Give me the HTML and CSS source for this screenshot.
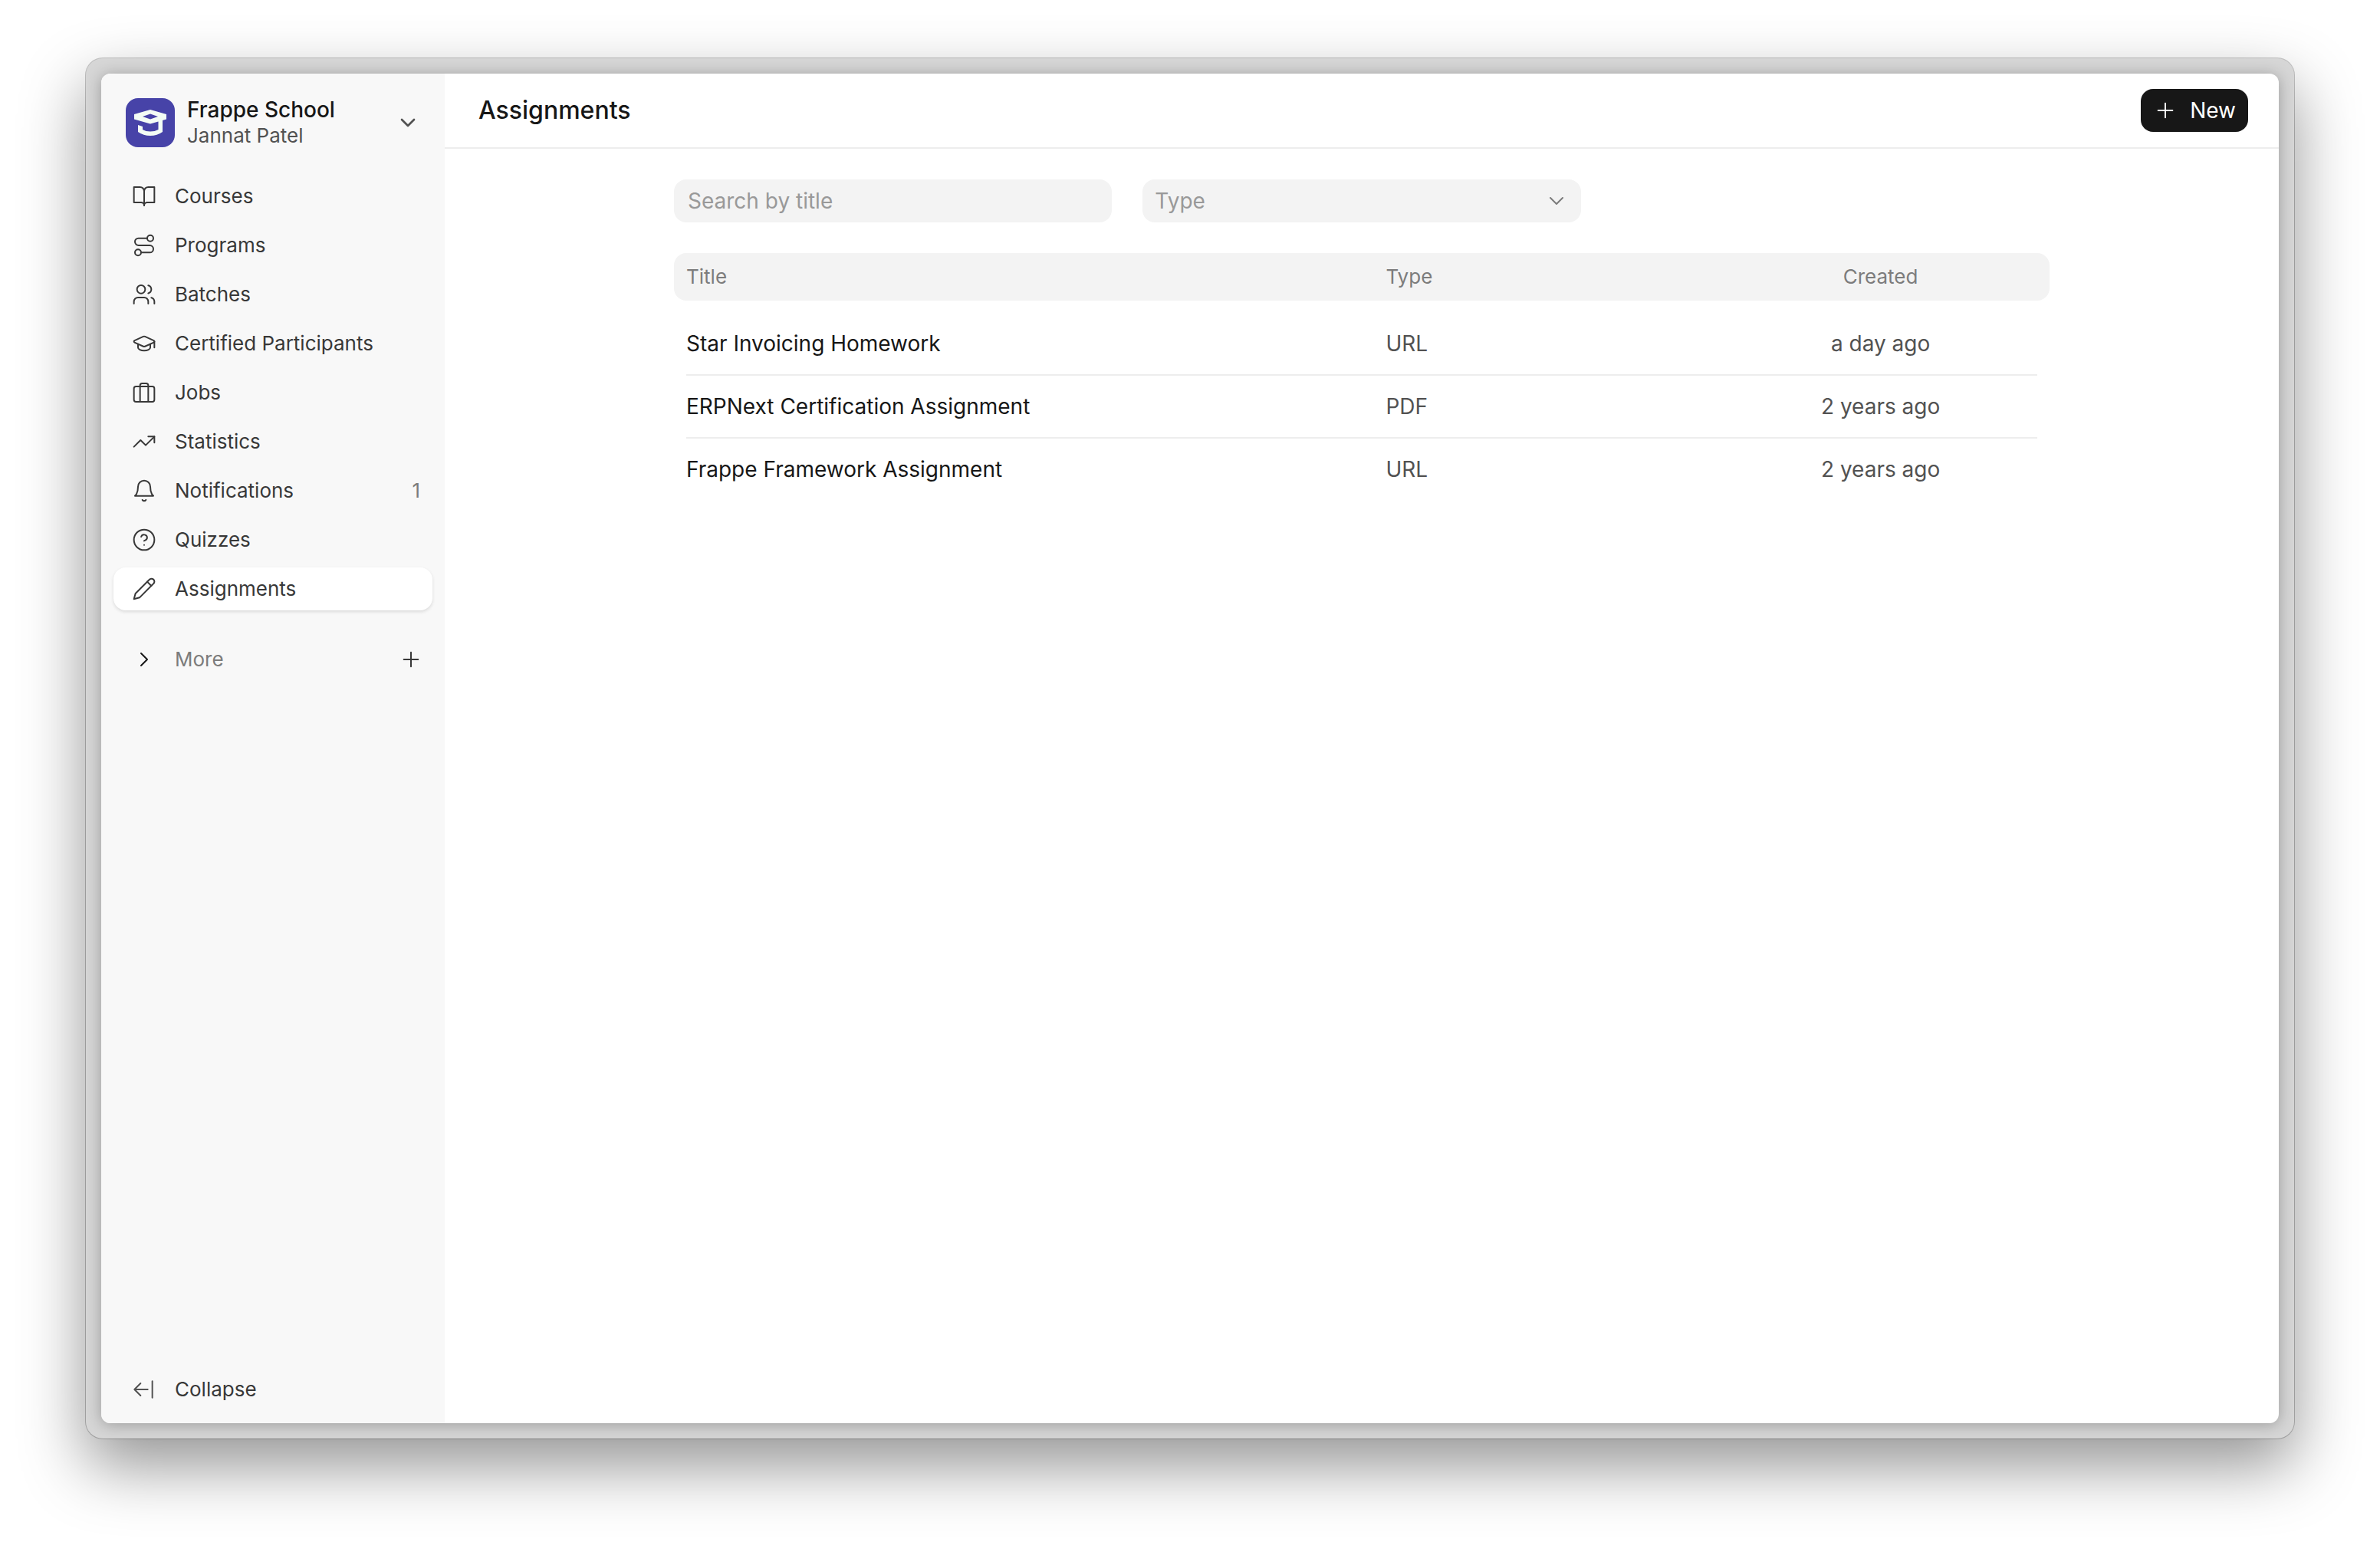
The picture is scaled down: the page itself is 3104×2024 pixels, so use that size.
FILE: index.html
```
<!DOCTYPE html>
<html lang="en">
<head>
    <meta charset="UTF-8">
    <meta name="viewport" content="width=device-width, initial-scale=1.0">
    <title>Assignments | Frappe School</title>
    <link rel="stylesheet" href="styles.css">
</head>
<body>

<div class="frame">
    <div class="window">
        <aside class="sidebar">
            <button class="brand" type="button">
                <svg class="brand-logo" viewBox="0 0 64 64">
                    <rect width="64" height="64" rx="16" fill="#4743a8"/>
                    <path fill="#f3fcf5" fill-rule="evenodd" d="M32 15 L53 21 V27.500 L48 29 V44 Q41 49 32 49 Q23 49 16 44 V35 L22 37 V41 Q26 43.500 32 43.500 Q38 43.500 42.500 41 V30.500 L32 33.500 L11 27.500 V21 Z M32 20.500 L22 24 L32 27.500 L42 24 Z"/>
                </svg>
                <span class="brand-text">
                    <span class="brand-name">Frappe School</span>
                    <span class="brand-user">Jannat Patel</span>
                </span>
                <svg class="icon icon-bold" viewBox="0 0 24 24"><path d="m6 9 6 6 6-6"/></svg>
            </button>

            <nav class="nav">
                <a class="nav-item" href="#">
                    <svg class="icon" viewBox="0 0 24 24"><path d="M2 3h6a4 4 0 0 1 4 4v14a3 3 0 0 0-3-3H2z"/><path d="M22 3h-6a4 4 0 0 0-4 4v14a3 3 0 0 1 3-3h7z"/></svg>
                    <span>Courses</span>
                </a>
                <a class="nav-item" href="#">
                    <svg class="icon" viewBox="0 0 24 24"><circle cx="6" cy="19" r="3"/><path d="M9 19h8.500a3.500 3.500 0 0 0 0-7h-11a3.500 3.500 0 0 1 0-7H15"/><circle cx="18" cy="5" r="3"/></svg>
                    <span>Programs</span>
                </a>
                <a class="nav-item" href="#">
                    <svg class="icon" viewBox="0 0 24 24"><path d="M16 21v-2a4 4 0 0 0-4-4H6a4 4 0 0 0-4 4v2"/><circle cx="9" cy="7" r="4"/><path d="M22 21v-2a4 4 0 0 0-3-3.870"/><path d="M16 3.130a4 4 0 0 1 0 7.750"/></svg>
                    <span>Batches</span>
                </a>
                <a class="nav-item" href="#">
                    <svg class="icon" viewBox="0 0 24 24"><path d="M21.420 10.922a1 1 0 0 0-.019-1.838L12.830 5.180a2 2 0 0 0-1.660 0L2.600 9.080a1 1 0 0 0 0 1.832l8.570 3.908a2 2 0 0 0 1.660 0z"/><path d="M22 10v6"/><path d="M6 12.500V16a6 3 0 0 0 12 0v-3.500"/></svg>
                    <span>Certified Participants</span>
                </a>
                <a class="nav-item" href="#">
                    <svg class="icon" viewBox="0 0 24 24"><path d="M8 21V5a2 2 0 0 1 2-2h4a2 2 0 0 1 2 2v16"/><rect x="2" y="6" width="20" height="15" rx="2"/></svg>
                    <span>Jobs</span>
                </a>
                <a class="nav-item" href="#">
                    <svg class="icon" viewBox="0 0 24 24"><polyline points="22 7 13.500 15.500 8.500 10.500 2 17"/><polyline points="16 7 22 7 22 13"/></svg>
                    <span>Statistics</span>
                </a>
                <a class="nav-item" href="#">
                    <svg class="icon" viewBox="0 0 24 24"><path d="M6 8a6 6 0 0 1 12 0c0 7 3 9 3 9H3s3-2 3-9"/><path d="M10.300 21a1.940 1.940 0 0 0 3.400 0"/></svg>
                    <span>Notifications</span>
                    <span class="nav-count">1</span>
                </a>
                <a class="nav-item" href="#">
                    <svg class="icon" viewBox="0 0 24 24"><circle cx="12" cy="12" r="10"/><path d="M9.090 9a3 3 0 0 1 5.830 1c0 2-3 3-3 3"/><path d="M12 17h.01"/></svg>
                    <span>Quizzes</span>
                </a>
                <a class="nav-item active" href="#">
                    <svg class="icon" viewBox="0 0 24 24"><path d="M17 3a2.850 2.830 0 1 1 4 4L7.500 20.500 2 22l1.500-5.500Z"/><path d="m15 5 4 4"/></svg>
                    <span>Assignments</span>
                </a>
            </nav>

            <div class="more">
                <button class="more-toggle" type="button">
                    <svg class="icon" viewBox="0 0 24 24"><path d="m9 18 6-6-6-6"/></svg>
                    <span>More</span>
                </button>
                <button class="more-add" type="button" aria-label="Add page">
                    <svg class="icon" viewBox="0 0 24 24"><path d="M5 12h14M12 5v14"/></svg>
                </button>
            </div>

            <button class="nav-item collapse" type="button">
                <svg class="icon" viewBox="0 0 24 24"><path d="M15.500 12H2.500M8.500 6l-6 6 6 6M20 4v16"/></svg>
                <span>Collapse</span>
            </button>
        </aside>

        <main class="main">
            <header class="header">
                <h1>Assignments</h1>
                <button class="btn" type="button">
                    <svg class="icon" viewBox="0 0 24 24"><path d="M5 12h14M12 5v14"/></svg>
                    <span>New</span>
                </button>
            </header>

            <div class="content">
                <div class="filters">
                    <input class="field" type="text" placeholder="Search by title" aria-label="Search by title">
                    <div class="select-wrap">
                        <select class="field" aria-label="Type">
                            <option value="">Type</option>
                            <option>URL</option>
                            <option>PDF</option>
                        </select>
                        <svg class="icon" viewBox="0 0 24 24"><path d="m6 9 6 6 6-6"/></svg>
                    </div>
                </div>

                <table class="list">
                    <thead>
                        <tr>
                            <th>Title</th>
                            <th>Type</th>
                            <th>Created</th>
                        </tr>
                    </thead>
                    <tbody>
                        <tr>
                            <td>Star Invoicing Homework</td>
                            <td>URL</td>
                            <td>a day ago</td>
                        </tr>
                        <tr>
                            <td>ERPNext Certification Assignment</td>
                            <td>PDF</td>
                            <td>2 years ago</td>
                        </tr>
                        <tr>
                            <td>Frappe Framework Assignment</td>
                            <td>URL</td>
                            <td>2 years ago</td>
                        </tr>
                    </tbody>
                </table>
            </div>
        </main>
    </div>
</div>

</body>
</html>
```
FILE: styles.css
```
* {
    box-sizing: border-box;
}
body {
    margin: 0;
    padding: 76px 112px 148px;
    height: 100vh;
    background-color: #fff;
    font-family: Inter, "Liberation Sans", sans-serif;
    font-size: 28px;
    line-height: 32px;
    color: #171717;
}
button {
    font: inherit;
    color: inherit;
    background: none;
    border: none;
    padding: 0;
    text-align: left;
    cursor: pointer;
}
.frame {
    height: 100%;
    padding: 20px;
    background-color: #d6d6d6;
    border-radius: 22px;
    box-shadow: 0 0 0 1px rgba(0, 0, 0, 0.22), 0 36px 84px rgba(0, 0, 0, 0.42);
}
.window {
    display: flex;
    height: 100%;
    background-color: #fff;
    border-radius: 12px;
    overflow: hidden;
    box-shadow: 0 2px 20px rgba(0, 0, 0, 0.28);
}
.icon {
    width: 32px;
    height: 32px;
    flex-shrink: 0;
    fill: none;
    stroke: currentColor;
    stroke-width: 1.5;
    stroke-linecap: round;
    stroke-linejoin: round;
}
.icon-bold {
    stroke-width: 2;
}

/* sidebar */
.sidebar {
    display: flex;
    flex-direction: column;
    flex-shrink: 0;
    width: 448px;
    padding: 16px;
    background-color: #f8f8f8;
    color: #383838;
}
.brand {
    display: flex;
    align-items: center;
    gap: 16px;
    height: 96px;
    padding: 0 16px;
    margin-bottom: 20px;
    color: #525252;
}
.brand-logo {
    width: 64px;
    height: 64px;
}
.brand-text {
    flex: 1;
    display: flex;
    flex-direction: column;
    gap: 2px;
}
.brand-name {
    font-weight: 500;
    color: #171717;
}
.brand-user {
    font-size: 26px;
}
.nav {
    display: flex;
    flex-direction: column;
    gap: 8px;
}
.nav-item {
    display: flex;
    align-items: center;
    gap: 24px;
    height: 56px;
    padding: 0 16px 0 24px;
    border-radius: 16px;
    font-size: 26px;
    color: #383838;
    text-decoration: none;
}
.nav-item.active {
    background-color: #fff;
    box-shadow: 0 2px 4px rgba(0, 0, 0, 0.12);
}
.nav-count {
    margin-left: auto;
    color: #7c7c7c;
}
.more {
    display: flex;
    align-items: center;
    justify-content: space-between;
    height: 56px;
    margin-top: 36px;
    padding: 0 12px 0 24px;
}
.more-toggle {
    display: flex;
    align-items: center;
    gap: 24px;
    font-size: 26px;
    color: #7c7c7c;
}
.more-toggle .icon {
    color: #171717;
}
.more-add {
    display: flex;
}
.collapse {
    margin-top: auto;
}
.collapse .icon {
    color: #525252;
}

/* page */
.main {
    flex: 1;
}
.header {
    display: flex;
    align-items: center;
    justify-content: space-between;
    height: 98px;
    padding: 0 40px 0 44px;
    border-bottom: 2px solid #ededed;
}
h1 {
    margin: 0;
    font-size: 32px;
    font-weight: 500;
}
.btn {
    display: flex;
    align-items: center;
    gap: 16px;
    height: 56px;
    padding: 0 16px;
    border-radius: 16px;
    background-color: #171717;
    color: #fff;
}
.content {
    width: 75%;
    margin: 40px auto;
}
.filters {
    display: grid;
    grid-template-columns: repeat(3, 1fr);
    gap: 40px;
    margin-bottom: 40px;
}
.field {
    width: 100%;
    height: 56px;
    padding: 0 16px;
    border: none;
    border-radius: 16px;
    background-color: #f3f3f3;
    font: inherit;
    color: #999;
    appearance: none;
    outline: none;
}
input.field {
    padding: 0 18px;
}
.field::placeholder {
    color: #999;
}
.select-wrap {
    position: relative;
}
.select-wrap .icon {
    position: absolute;
    top: 12px;
    right: 16px;
    color: #7c7c7c;
    pointer-events: none;
}

/* list */
.list {
    display: block;
}
.list thead,
.list tbody {
    display: block;
}
.list tr {
    display: grid;
    grid-template-columns: 28fr 13fr 13fr;
    gap: 32px;
    align-items: center;
}
.list thead tr {
    height: 62px;
    padding: 0 16px;
    border-radius: 16px;
    background-color: #f3f3f3;
    font-size: 26px;
    color: #7c7c7c;
}
.list tbody {
    padding: 16px 16px 0;
}
.list tbody tr {
    height: 82px;
    border-bottom: 2px solid #ededed;
}
.list tbody tr:last-child {
    border-bottom-color: transparent;
}
.list th,
.list td {
    padding: 0;
    font-weight: 400;
    text-align: left;
}
.list td {
    color: #525252;
}
.list td:first-child {
    color: #171717;
}
.list th:last-child,
.list td:last-child {
    text-align: center;
}
```
